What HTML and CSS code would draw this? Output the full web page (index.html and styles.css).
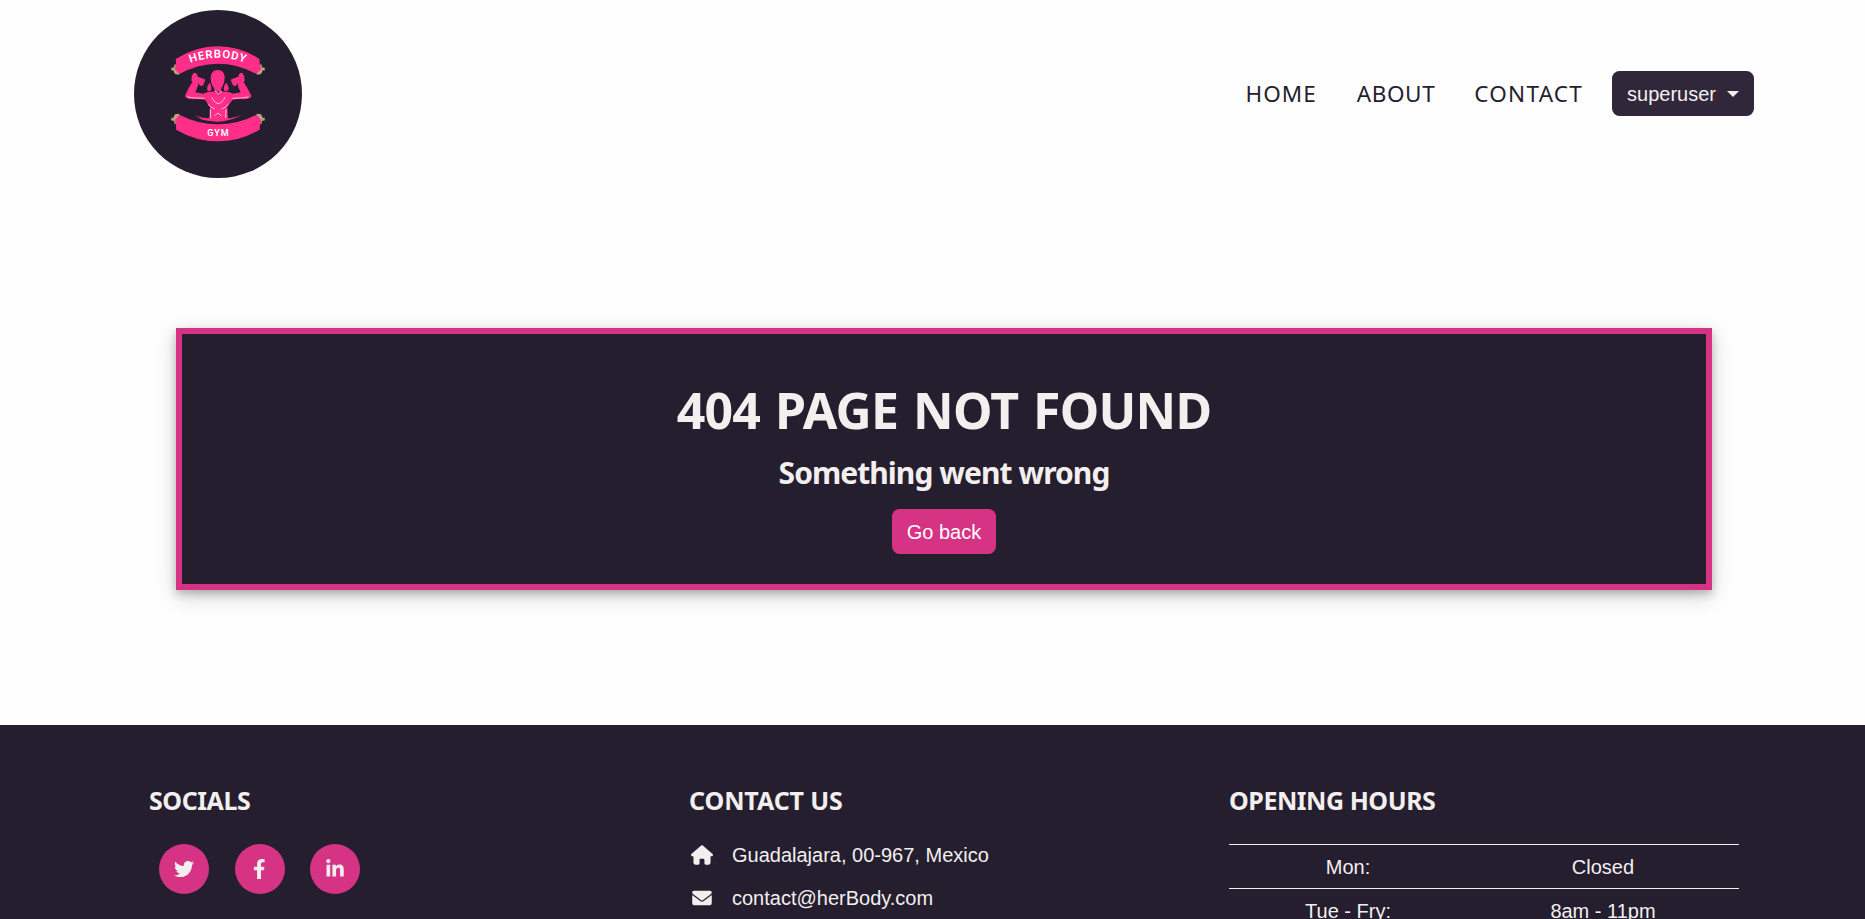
FILE: index.html
```html
<!DOCTYPE html>
<html lang="en">
<head>
<meta charset="utf-8">
<title>HerBody Gym</title>
<link rel="stylesheet" href="styles.css">
</head>
<body>
<header class="navbar">
  <a class="brand" href="#">
    <svg class="logo" viewBox="42 30 504 504" role="img" aria-label="HerBody Gym">
      <defs>
        <path id="arc-top" d="M190 197Q294 150 398 197"/>
      </defs>
      <circle cx="294" cy="282" r="252" fill="#251e2f"/>
      <g fill="#b8a67e">
        <path d="M153 204l9-2 2-10 13 9-5 10 8 9-4 4-11-2-6-12-4 3z"/>
        <path d="M435 204l-9-2-2-10-13 9 5 10-8 9 4 4 11-2 6-12 4 3z"/>
        <path d="M153 361l9 2 2 10 13-9-5-10 8-9-4-4-11 2-6 12-4-3z"/>
        <path d="M435 361l-9 2-2 10-13-9 5-10-8-9 4-4 11 2 6 12 4-3z"/>
      </g>
      <g fill="#ff2e88">
        <path d="M167 177Q226 139 294 139T418 177Q418 192 424 207L410 222Q354 191 294 191T178 222L164 207Q170 194 167 177z"/>
        <path d="M178 344Q234 373 294 373T410 344L424 361Q419 373 419 389Q360 424 294 424T168 389Q170 373 164 361z"/>
        <path d="M293 210c14 0 22 10 21 25-1 14-6 24-10 30l-1 10h-19l-2-10c-5-7-10-16-10-30 0-15 8-25 21-25z"/>
        <path d="M215 229l6-10q6-2 10 4l2 7 17 6q6 0 5 7l-6 13q-6 4-11-1l-2-6-11-4-6 2q-8-4-4-10z"/>
        <path d="M373 229l-6-10q-6-2-10 4l-2 7-17 6q-6 0-5 7l6 13q6 4 11-1l2-6 11-4 6 2q8-4 4-10z"/>
        <path d="M221 239l15 9q-4 15-10 29l23 4q20-9 36-6l9 5 10-5q18-3 36 6l22-4q-8-14-10-29l14-9q17 24 29 50-6 8-20 9-22-2-37 1-7 9-16 21l2 37-12 7h-31q-28-1-45-9 22 3 32-1l2-34q-9-12-15-21-22-3-40-1-16-1-20-9 8-25 28-50z"/>
        <path d="M269 248q-10 12-7 23 5 5 11 0 4-9-4-23zM318 248q-9 13-6 23 6 5 13 0 4-11-7-23z"/>
        <path d="M223 345Q292 371 366 345Q332 363 291 365Q250 362 223 345z"/>
      </g>
      <g fill="none" stroke="#ffd3e5" stroke-width="2.5" stroke-linecap="round">
        <path d="M203 291q18 4 49 4M385 291q-18 4-47 4M277 293q2 13 17 18 15-3 20-18M264 313q8 10 20 14M325 313q-8 10-20 14M271 329l1 24M318 329l-1 24M284 347l10-8 9 8M286 274l9 7 10-7"/>
      </g>
      <text class="logo-text"><textPath href="#arc-top" startOffset="50%" text-anchor="middle">HERBODY</textPath></text>
      <text class="logo-text logo-text-small" x="295" y="407" text-anchor="middle">GYM</text>
    </svg>
  </a>
  <nav class="nav">
    <a class="nav-link home" href="#">HOME</a>
    <a class="nav-link about" href="#">ABOUT</a>
    <a class="nav-link contact" href="#">CONTACT</a>
    <button class="btn btn-user"><span>superuser</span><i class="caret"></i></button>
  </nav>
</header>
<main class="main">
  <section class="card">
    <h1 class="card-title">404 PAGE NOT FOUND</h1>
    <h2 class="card-subtitle">Something went wrong</h2>
    <a class="btn btn-pink" href="#">Go back</a>
  </section>
</main>
<footer class="footer">
  <section class="col">
    <h3 class="col-title">SOCIALS</h3>
    <div class="socials">
      <a class="social" href="#" aria-label="Twitter"><svg width="20" height="20" viewBox="0 0 512 512"><path d="M459.37 151.716c.325 4.548.325 9.097.325 13.645 0 138.72-105.583 298.558-298.558 298.558-59.452 0-114.68-17.219-161.137-47.106 8.447.974 16.568 1.299 25.34 1.299 49.055 0 94.213-16.568 130.274-44.832-46.132-.975-84.792-31.188-98.112-72.772 6.498.974 12.995 1.624 19.818 1.624 9.421 0 18.843-1.3 27.614-3.573-48.081-9.747-84.143-51.98-84.143-102.985v-1.299c13.969 7.797 30.214 12.67 47.431 13.319-28.264-18.843-46.781-51.005-46.781-87.391 0-19.492 5.197-37.36 14.294-52.954 51.655 63.675 129.3 105.258 216.365 109.807-1.624-7.797-2.599-15.918-2.599-24.04 0-57.828 46.782-104.934 104.934-104.934 30.213 0 57.502 12.67 76.67 33.137 23.715-4.548 46.456-13.32 66.599-25.34-7.798 24.366-24.366 44.833-46.132 57.827 21.117-2.273 41.584-8.122 60.426-16.243-14.292 20.791-32.161 39.308-52.628 54.253z"/></svg></a>
      <a class="social" href="#" aria-label="Facebook"><svg width="12.5" height="20" viewBox="0 0 320 512"><path d="M279.14 288l14.22-92.66h-88.91v-60.13c0-25.35 12.42-50.06 52.24-50.06h40.42V6.26S260.43 0 225.36 0c-73.22 0-121.08 44.38-121.08 124.72v70.62H22.89V288h81.39v224h100.17V288z"/></svg></a>
      <a class="social" href="#" aria-label="LinkedIn"><svg width="18" height="20" viewBox="0 0 448 512"><path d="M100.28 448H7.4V148.9h92.88zM53.79 108.1C24.09 108.1 0 83.5 0 53.8a53.79 53.79 0 0 1 107.58 0c0 29.7-24.1 54.3-53.79 54.3zM447.9 448h-92.68V302.4c0-34.7-.7-79.2-48.29-79.2-48.29 0-55.69 37.7-55.69 76.7V448h-92.78V148.9h89.08v40.8h1.3c12.4-23.5 42.69-48.3 87.88-48.3 94 0 111.28 61.9 111.28 142.3V448z"/></svg></a>
    </div>
  </section>
  <section class="col">
    <h3 class="col-title title-contact">CONTACT US</h3>
    <p class="contact-row"><svg width="22" height="20" viewBox="0 0 576 512"><path d="M575.8 255.500c0 18-15 32.100-32 32.100h-32l.7 160.200c0 36-20 64.200-56 64.200H392c-22 0-40-18-40-40v-88c0-18-14-32-32-32h-64c-18 0-32 14-32 32v88c0 22-18 40-40 40h-64c-36 0-56-28-56-64V287.600H32c-18 0-32-14-32-32.100 0-9 3-17 10-24L266.400 8c7-7 15-8 22-8s15 2 21 7L564.800 231.500c8 7 12 15 11 24z"/></svg><span>Guadalajara, 00-967, Mexico</span></p>
    <p class="contact-row"><svg width="22" height="20" viewBox="-32 0 576 512"><path d="M48 64C21.500 64 0 85.500 0 112c0 15.100 7.100 29.300 19.200 38.400L236.800 313.600c11.400 8.500 27 8.500 38.400 0L492.800 150.400c12.100-9.100 19.200-23.300 19.200-38.400 0-26.500-21.500-48-48-48H48zM0 176v208c0 35.300 28.700 64 64 64h384c35.300 0 64-28.700 64-64V176L294.400 339.200c-22.800 17.100-54 17.100-76.800 0L0 176z"/></svg><span>contact@herBody.com</span></p>
  </section>
  <section class="col">
    <h3 class="col-title">OPENING HOURS</h3>
    <table class="hours">
      <tr><td class="day">Mon:</td><td>Closed</td></tr>
      <tr><td class="day">Tue - Fry:</td><td>8am - 11pm</td></tr>
    </table>
  </section>
</footer>
</body>
</html>
```
FILE: styles.css
```css
* { box-sizing: border-box; }
html, body { height: 100%; }
body {
  margin: 0;
  overflow: hidden;
  background: #fefefe;
  color: #f3efee;
  font: 20px/30px "Liberation Sans", Arial, sans-serif;
}
a { color: inherit; text-decoration: none; }
h1, h2, h3, p { margin: 0; }

.navbar {
  display: flex;
  align-items: center;
  justify-content: space-between;
  height: 188px;
  padding: 0 111px 0 134px;
}
.logo { display: block; width: 168px; height: 168px; }
.logo-text { fill: #fff; font: 600 34px Roboto, sans-serif; letter-spacing: 2.6px; }
.logo-text-small { font-size: 27px; }
.nav { display: flex; align-items: center; }
.nav-link {
  margin-right: 40px;
  color: #251e2f;
  font: 400 22.5px/34px "Noto Sans", sans-serif;
  letter-spacing: 1px;
}
.nav-link.about { margin-right: 39px; letter-spacing: .6px; }
.nav-link.contact { margin-right: 29px; letter-spacing: 1.25px; }
.btn {
  display: inline-flex;
  align-items: center;
  height: 45px;
  padding: 0 15px;
  border: 0;
  border-radius: 7.5px;
  font: 20px/30px "Liberation Sans", Arial, sans-serif;
}
.btn-user { margin-bottom: 1px; background: #30283a; color: #f3efee; }
.btn-pink { background: #d63384; color: #fff; }
.caret {
  margin-left: 11px;
  border: 6px solid transparent;
  border-top-color: currentColor;
  border-bottom: 0;
}

.main { padding: 140px 153px 135px 176px; }
.card {
  height: 262px;
  padding-top: 46px;
  border: 6px solid #d63384;
  background: #251e2f;
  text-align: center;
  box-shadow: 0 4px 8px rgba(0, 0, 0, .2), 0 6px 20px rgba(0, 0, 0, .19);
}
.card-title { margin-bottom: 15px; font: bold 50px/60px "Noto Sans", sans-serif; letter-spacing: -.75px; word-spacing: 2.5px; }
.card-subtitle { margin-bottom: 18px; font: bold 30px/36px "Noto Sans", sans-serif; letter-spacing: -.95px; }

.footer {
  display: grid;
  grid-template-columns: repeat(3, 510px);
  column-gap: 30px;
  height: 194px;
  padding: 60px 126px 0 149px;
  overflow: hidden;
  background: #251e2f;
}
.col-title { margin-bottom: 29px; font: bold 25px/30px "Noto Sans", sans-serif; letter-spacing: -.45px; }
.title-contact { letter-spacing: -.1px; }
.socials { display: flex; gap: 25.5px; padding-left: 10px; }
.social {
  display: flex;
  align-items: center;
  justify-content: center;
  width: 50px;
  height: 50px;
  border-radius: 50%;
  background: #d63384;
}
svg { fill: #f3efee; }
.contact-row { display: flex; align-items: center; gap: 19px; padding-left: 2px; margin-bottom: 13px; }
.col-title + .contact-row { margin-top: -4px; }
.hours { width: 100%; border-collapse: collapse; text-align: center; }
.hours td { padding: 7px 0 6px; border-top: 1px solid #f3efee; }
.hours .day { width: 238px; }
```
